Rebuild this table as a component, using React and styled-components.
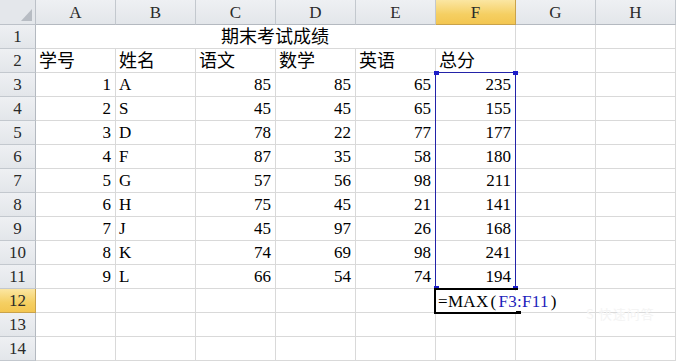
import React from 'react';
import styled, { createGlobalStyle, css } from 'styled-components';

const GlobalStyle = createGlobalStyle`
  html, body {
    margin: 0;
    padding: 0;
    background: #fff;
    overflow: hidden;
  }
`;

const COLS = ['A', 'B', 'C', 'D', 'E', 'F', 'G', 'H'];
const HEADS = ['学号', '姓名', '语文', '数学', '英语', '总分'];
const ROWS = [
  [1, 'A', 85, 85, 65, 235],
  [2, 'S', 45, 45, 65, 155],
  [3, 'D', 78, 22, 77, 177],
  [4, 'F', 87, 35, 58, 180],
  [5, 'G', 57, 56, 98, 211],
  [6, 'H', 75, 45, 21, 141],
  [7, 'J', 45, 97, 26, 168],
  [8, 'K', 74, 69, 98, 241],
  [9, 'L', 66, 54, 74, 194],
];

const FONT = `"Liberation Serif", "Noto Sans CJK SC", serif`;

const Sheet = styled.div`
  position: relative;
  display: grid;
  grid-template-columns: 36px repeat(8, 80px);
  grid-template-rows: 25px repeat(14, 24px);
  font-family: ${FONT};
  font-size: 17px;
  color: #000;
  width: 676px;
  height: 361px;
  overflow: hidden;
`;

const headerBg = css`
  background: ${(p) =>
    p.$active
      ? 'linear-gradient(#fbe6a2, #f5cf62 60%, #f3c651)'
      : 'linear-gradient(#eef0f3, #e3e6ea)'};
`;

const Corner = styled.div`
  background: #e4e7eb;
  border-right: 1px solid #bcc1c8;
  border-bottom: 1px solid #bcc1c8;
  display: flex;
  align-items: flex-end;
  justify-content: flex-end;
  padding: 0 3px 3px 0;
`;

const ColHead = styled.div`
  ${headerBg};
  border-right: 1px solid ${(p) => (p.$active ? '#c9a24a' : '#c3c8ce')};
  border-bottom: 1px solid ${(p) => (p.$active ? '#c9a24a' : '#b4b9c0')};
  display: flex;
  align-items: center;
  justify-content: center;
  color: #2a2a2a;
  padding-top: 1px;
`;

const RowHead = styled.div`
  ${headerBg};
  border-right: 1px solid ${(p) => (p.$active ? '#c9a24a' : '#b4b9c0')};
  border-bottom: 1px solid ${(p) => (p.$active ? '#c9a24a' : '#c3c8ce')};
  display: flex;
  align-items: center;
  justify-content: center;
  color: #2a2a2a;
`;

const Cell = styled.div`
  grid-column: ${(p) => (p.$span ? `span ${p.$span}` : 'auto')};
  border-right: 1px solid #d9d9d9;
  border-bottom: 1px solid #d9d9d9;
  display: flex;
  align-items: flex-end;
  justify-content: ${(p) =>
    p.$align === 'right' ? 'flex-end' : p.$align === 'center' ? 'center' : 'flex-start'};
  padding: 0 4px 1px 3px;
  font-size: ${(p) => (p.$cjk ? '18px' : '17px')};
  line-height: 20px;
  white-space: nowrap;
  overflow: hidden;
`;

const Selection = styled.div`
  position: absolute;
  left: 435px;
  top: 72px;
  width: 81px;
  height: 217px;
  box-sizing: border-box;
  border: 1px solid #2323a8;
  pointer-events: none;
`;

const Handle = styled.div`
  position: absolute;
  width: ${(p) => (p.$w ? `${p.$w}px` : '5px')};
  height: ${(p) => (p.$h ? `${p.$h}px` : '4px')};
  background: ${(p) => p.$color || '#1c1cc8'};
  ${(p) => (p.$right ? 'right: -3px;' : 'left: -2px;')}
  ${(p) => (p.$bottom ? 'bottom: -2px;' : 'top: -2px;')}
`;

const EditBox = styled.div`
  position: absolute;
  left: 434px;
  top: 288px;
  width: 84px;
  height: 26px;
  box-sizing: border-box;
  border-left: 2px solid #000;
  border-top: 2px solid #000;
  border-bottom: 2px solid #000;
`;

const Formula = styled.span`
  position: absolute;
  left: 2px;
  bottom: 0px;
  line-height: 21px;
  background: #fff;
  padding-right: 4px;
  white-space: nowrap;
  letter-spacing: 0.3px;
`;

const Ref = styled.span`
  color: #1d1dbb;
`;

const Paren = styled.span`
  margin: 0 2px;
`;

const Watermark = styled.div`
  position: absolute;
  left: 586px;
  top: 304px;
  font-family: "Noto Sans CJK SC", sans-serif;
  font-size: 13px;
  color: #f4f4f4;
  letter-spacing: 1px;
`;

function CornerMark() {
  return (
    <svg width="11" height="12" viewBox="0 0 11 12">
      <polygon points="11,0 11,12 0,12" fill="#b7bcc3" />
    </svg>
  );
}

export default function App() {
  const cells = [];
  cells.push(
    <Corner key="corner">
      <CornerMark />
    </Corner>
  );
  COLS.forEach((c) =>
    cells.push(
      <ColHead key={`h${c}`} $active={c === 'F'}>
        {c}
      </ColHead>
    )
  );

  for (let r = 1; r <= 14; r++) {
    cells.push(
      <RowHead key={`r${r}`} $active={r === 12}>
        {r}
      </RowHead>
    );
    if (r === 1) {
      cells.push(
        <Cell key="title" $span={6} $align="center" $cjk>
          期末考试成绩
        </Cell>
      );
      cells.push(<Cell key="1G" />, <Cell key="1H" />);
    } else if (r === 2) {
      HEADS.forEach((h) =>
        cells.push(
          <Cell key={`2${h}`} $cjk>
            {h}
          </Cell>
        )
      );
      cells.push(<Cell key="2G" />, <Cell key="2H" />);
    } else if (r <= 11) {
      const row = ROWS[r - 3];
      row.forEach((v, i) =>
        cells.push(
          <Cell key={`${r}-${i}`} $align={i === 1 ? 'left' : 'right'}>
            {v}
          </Cell>
        )
      );
      cells.push(<Cell key={`${r}G`} />, <Cell key={`${r}H`} />);
    } else {
      COLS.forEach((c) => cells.push(<Cell key={`${r}${c}`} />));
    }
  }

  return (
    <>
      <GlobalStyle />
      <Sheet>
        {cells}
        <Selection>
          <Handle />
          <Handle $right />
          <Handle $bottom />
          <Handle $right $bottom />
        </Selection>
        <EditBox>
          <Formula>
            =MAX<Paren>(</Paren>
            <Ref>F3:F11</Ref>
            <Paren>)</Paren>
          </Formula>
          <Handle $right $bottom $color="#000" $w={5} $h={3} />
        </EditBox>
        <Watermark>S 快速问答</Watermark>
      </Sheet>
    </>
  );
}
